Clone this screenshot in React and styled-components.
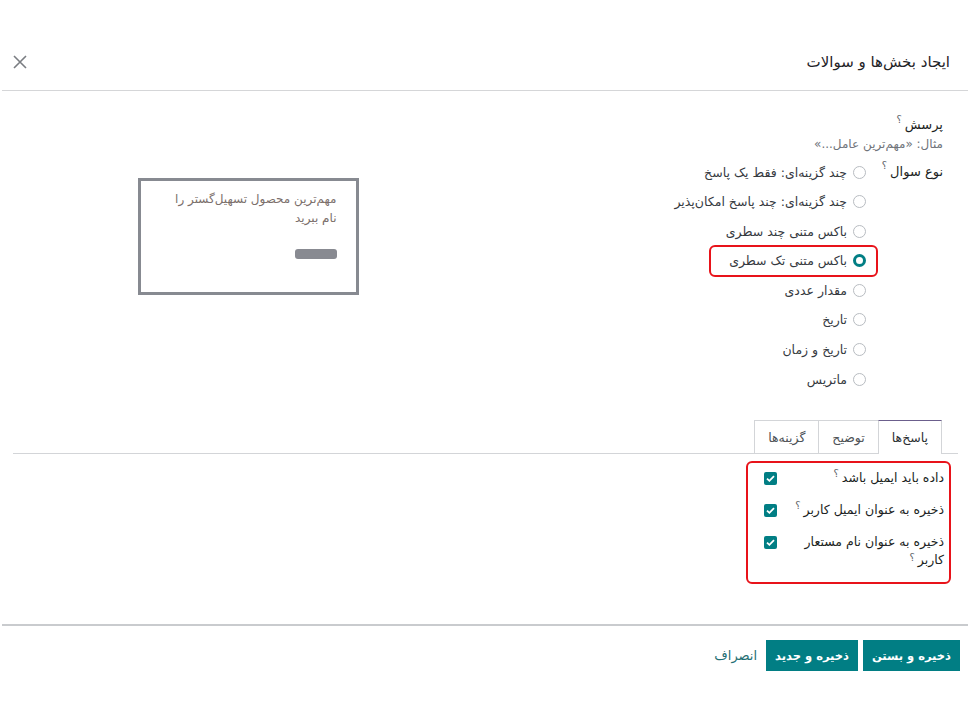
import React from "react";
import styled, { createGlobalStyle } from "styled-components";

const Global = createGlobalStyle`
  html, body { margin: 0; padding: 0; background: #fff; }
  body { font-family: "DejaVu Sans", "Noto Sans", sans-serif; color: #212529; }
  * { box-sizing: border-box; }
`;

const Dialog = styled.div`
  direction: rtl;
  margin: 0 2px;
  padding-top: 33px;
  display: flex;
  flex-direction: column;
  min-height: 727px;
`;

const Header = styled.div`
  height: 58px;
  display: flex;
  align-items: center;
  justify-content: space-between;
  padding: 0 18px 0 10px;
  border-bottom: 1px solid #d5d6d8;
`;

const Title = styled.h4`
  margin: 0;
  font-size: 15px;
  font-weight: 400;
  color: #1f2327;
`;

const CloseBtn = styled.button`
  border: 0;
  background: none;
  padding: 0;
  width: 16px;
  height: 16px;
  display: flex;
  color: #7a7d82;
`;

const Body = styled.div`
  padding: 24px 10px 0 11px;
  height: 533px;
`;

const Sheet = styled.div`
  display: flex;
  padding-right: 15px;
`;

const MainGroup = styled.div`
  width: 465px;
  display: flex;
  flex-direction: column;
`;

const Label = styled.label`
  font-size: 13px;
  font-weight: 500;
  color: #1c1f23;
  line-height: 20px;
  white-space: nowrap;
`;

const Help = styled.span`
  display: inline-block;
  position: relative;
  top: ${(p) => p.$top || 0}px;
  font-size: 10px;
  line-height: 10px;
  vertical-align: top;
  color: #5f6469;
  margin-right: 3px;
  font-weight: 400;
`;

const Placeholder = styled.div`
  font-size: 12px;
  color: #6f747a;
  line-height: 18px;
  margin-bottom: 8px;
`;

const FieldRow = styled.div`
  display: flex;
  align-items: flex-start;
`;

const LabelCell = styled.div`
  width: ${(p) => p.$w || 77}px;
  flex-shrink: 0;
`;

const RadioList = styled.div`
  display: flex;
  flex-direction: column;
  align-items: flex-start;
  gap: 9.6px;
  padding-top: 1px;
`;

const Option = styled.div`
  position: relative;
  display: flex;
  align-items: center;
  gap: 6px;
  height: 20px;
  font-size: 12.5px;
  color: #363a3f;
  white-space: nowrap;
  &::after {
    content: "";
    display: ${(p) => (p.$marked ? "block" : "none")};
    position: absolute;
    top: -6px;
    bottom: -6px;
    right: -12px;
    left: -20px;
    border: 2px solid #e8131a;
    border-radius: 6px;
  }
`;

const RadioDot = styled.span`
  width: 13px;
  height: 13px;
  border-radius: 50%;
  flex-shrink: 0;
  border: ${(p) => (p.$on ? "3.5px solid #017e84" : "1px solid #b8bcc1")};
  background: #fff;
`;

const PreviewCol = styled.div`
  flex: 1;
  display: flex;
  justify-content: center;
  padding-top: 63px;
  padding-left: 5px;
`;

const PreviewBox = styled.div`
  width: 221px;
  height: 117px;
  border: 3px solid #878a91;
  padding: 9px 19px 0 18px;
  display: flex;
  flex-direction: column;
  align-items: flex-start;
`;

const PreviewText = styled.div`
  font-size: 12px;
  line-height: 19px;
  color: #7b6f6b;
`;

const PreviewBar = styled.div`
  margin-top: 21px;
  width: 42px;
  height: 10px;
  border-radius: 3px;
  background: #888a91;
`;

const Notebook = styled.div`
  margin-top: 31px;
`;

const TabBar = styled.div`
  display: flex;
  padding-right: 16px;
  border-bottom: 1px solid #d3d5d8;
  height: 34px;
  align-items: flex-end;
`;

const Tab = styled.div`
  padding: 0 ${(p) => p.$px || 12}px;
  display: flex;
  align-items: center;
  font-size: 12.5px;
  color: ${(p) => (p.$active ? "#2b2f33" : "#4d5257")};
  border: 1px solid #d3d5d8;
  border-top: 1px solid ${(p) => (p.$active ? "#6b5e8c" : "#d3d5d8")};
  border-bottom: 0;
  margin-bottom: ${(p) => (p.$active ? "-1px" : "0")};
  height: ${(p) => (p.$active ? "34px" : "33px")};
  background: #fff;
  & + & {
    border-right: 0;
  }
`;

const CheckGroup = styled.div`
  margin: 7px 7px 0 0;
  width: 205px;
  border: 2px solid #e8131a;
  border-radius: 6px;
  padding: 6px 5px 13px 0;
  display: flex;
  flex-direction: column;
  gap: 14px;
`;

const CheckRow = styled.div`
  display: flex;
  align-items: flex-start;
`;

const CheckLabel = styled.div`
  width: 158px;
  font-size: 12.5px;
  line-height: 18px;
  color: #1c1f23;
`;

const CheckCell = styled.div`
  padding: 3px 9px 0 0;
  display: flex;
`;

const Checkbox = styled.span`
  width: 13px;
  height: 13px;
  border-radius: 2px;
  background: #017e84;
  display: flex;
  align-items: center;
  justify-content: center;
`;

const Footer = styled.div`
  border-top: 2px solid #c9cbce;
  padding: 14px 8px 0;
  display: flex;
  align-items: center;
  gap: 5px;
`;

const PrimaryBtn = styled.button`
  font-family: inherit;
  height: 31px;
  padding: 0 ${(p) => p.$px || 9}px;
  border: 0;
  border-radius: 0;
  background: #017e84;
  color: #fff;
  font-weight: 700;
  font-size: 11.5px;
`;

const LinkBtn = styled.button`
  font-family: inherit;
  border: 0;
  background: none;
  color: #1f6f74;
  font-size: 13px;
  padding: 0 4px;
  height: 31px;
`;

const Check = () => (
  <svg width="9" height="7" viewBox="0 0 9 7">
    <path d="M1 3.6 L3.4 5.8 L8 1.2" stroke="#fff" strokeWidth="1.8" fill="none" />
  </svg>
);

const options = [
  "چند گزینه‌ای: فقط یک پاسخ",
  "چند گزینه‌ای: چند پاسخ امکان‌پذیر",
  "باکس متنی چند سطری",
  "باکس متنی تک سطری",
  "مقدار عددی",
  "تاریخ",
  "تاریخ و زمان",
  "ماتریس",
];

export default function App() {
  return (
    <>
      <Global />
      <Dialog>
        <Header>
          <Title>ایجاد بخش‌ها و سوالات</Title>
          <CloseBtn aria-label="close">
            <svg width="16" height="16" viewBox="0 0 16 16">
              <path d="M2 2 L14 14 M14 2 L2 14" stroke="#7a7d82" strokeWidth="1.6" />
            </svg>
          </CloseBtn>
        </Header>
        <Body>
          <Sheet>
            <MainGroup>
              <Label>
                پرسش<Help>؟</Help>
              </Label>
              <Placeholder>مثال: «مهم‌ترین عامل...»</Placeholder>
              <FieldRow>
                <LabelCell>
                  <Label>
                    نوع سوال<Help>؟</Help>
                  </Label>
                </LabelCell>
                <RadioList>
                  {options.map((o, i) => (
                    <Option key={o} $marked={i === 3}>
                      <RadioDot $on={i === 3} />
                      {o}
                    </Option>
                  ))}
                </RadioList>
              </FieldRow>
            </MainGroup>
            <PreviewCol>
              <PreviewBox>
                <PreviewText>
                  مهم‌ترین محصول تسهیل‌گستر را
                  <br />
                  نام ببرید
                </PreviewText>
                <PreviewBar />
              </PreviewBox>
            </PreviewCol>
          </Sheet>
          <Notebook>
            <TabBar>
              <Tab $active $px={13}>پاسخ‌ها</Tab>
              <Tab $px={13}>توضیح</Tab>
              <Tab $px={13}>گزینه‌ها</Tab>
            </TabBar>
            <CheckGroup>
              <CheckRow>
                <CheckLabel>
                  داده باید ایمیل باشد<Help>؟</Help>
                </CheckLabel>
                <CheckCell>
                  <Checkbox><Check /></Checkbox>
                </CheckCell>
              </CheckRow>
              <CheckRow>
                <CheckLabel>
                  ذخیره به عنوان ایمیل کاربر<Help>؟</Help>
                </CheckLabel>
                <CheckCell>
                  <Checkbox><Check /></Checkbox>
                </CheckCell>
              </CheckRow>
              <CheckRow>
                <CheckLabel>
                  ذخیره به عنوان نام مستعار کاربر<Help $top={2}>؟</Help>
                </CheckLabel>
                <CheckCell>
                  <Checkbox><Check /></Checkbox>
                </CheckCell>
              </CheckRow>
            </CheckGroup>
          </Notebook>
        </Body>
        <Footer>
          <PrimaryBtn $px={9}>ذخیره و بستن</PrimaryBtn>
          <PrimaryBtn $px={9}>ذخیره و جدید</PrimaryBtn>
          <LinkBtn>انصراف</LinkBtn>
        </Footer>
      </Dialog>
    </>
  );
}
